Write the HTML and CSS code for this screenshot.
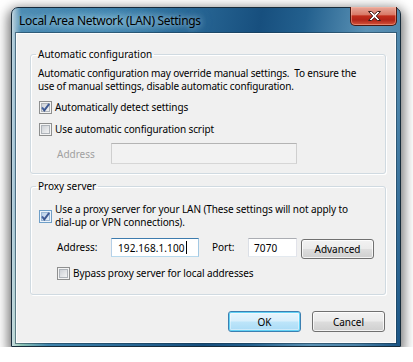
FILE: index.html
```html
<!DOCTYPE html>
<html>
<head>
<meta charset="utf-8">
<link rel="stylesheet" href="styles.css">
</head>
<body>
<div class="window">
  <div class="titlebar">
    <span class="title">Local Area Network (LAN) Settings</span>
    <button class="close" aria-label="Close">
      <svg width="13" height="10" viewBox="0 0 13 10"><polygon points="0.5,0.5 3.6,0.5 6.5,3.2 9.4,0.5 12.5,0.5 8.3,5 12.5,9.5 9.4,9.5 6.5,6.8 3.6,9.5 0.5,9.5 4.7,5" fill="#ffffff" stroke="#3a1c18" stroke-width="1" stroke-linejoin="round"/></svg>
    </button>
  </div>
  <div class="client">
    <fieldset class="group group-auto">
      <legend>Automatic configuration</legend>
      <p class="desc">Automatic configuration may override manual settings.&nbsp; To ensure the<br>use of manual settings, disable automatic configuration.</p>
      <label class="check row-cb1">
        <span class="cb"><svg width="11" height="11" viewBox="0 0 11 11"><defs><linearGradient id="ck" x1="0" y1="0" x2="1" y2="1"><stop offset="0" stop-color="#5a78b8"/><stop offset="1" stop-color="#2a4378"/></linearGradient></defs><path d="M2 5.4 L4.3 8.3 L9.2 1.8" fill="none" stroke="url(#ck)" stroke-width="2"/></svg></span>
        <span>Automatically detect settings</span>
      </label>
      <label class="check row-cb2">
        <span class="cb"></span>
        <span>Use automatic configuration script</span>
      </label>
      <div class="field-row row-script">
        <span class="field-label disabled">Address</span>
        <span class="textbox textbox-disabled script-box"></span>
      </div>
    </fieldset>
    <fieldset class="group group-proxy">
      <legend>Proxy server</legend>
      <label class="check multi">
        <span class="cb hot"><svg width="11" height="11" viewBox="0 0 11 11"><path d="M2 5.4 L4.3 8.3 L9.2 1.8" fill="none" stroke="url(#ck)" stroke-width="2"/></svg></span>
        <span>Use a proxy server for your LAN (These settings will not apply to<br>dial-up or VPN connections).</span>
      </label>
      <div class="field-row row-proxy">
        <span class="field-label">Address:</span>
        <span class="textbox textbox-focus addr-box">192.168.1.100<span class="caret"></span></span>
        <span class="port-label">Port:</span>
        <span class="textbox port-box">7070</span>
        <button class="btn advanced">Advanced</button>
      </div>
      <label class="check sub">
        <span class="cb"></span>
        <span>Bypass proxy server for local addresses</span>
      </label>
    </fieldset>
    <div class="actions">
      <button class="btn default">OK</button>
      <button class="btn">Cancel</button>
    </div>
  </div>
</div>
</body>
</html>
```
FILE: styles.css
```css
html, body {
  margin: 0;
  background: #ffffff;
}
body {
  font-family: "Noto Sans", "DejaVu Sans", sans-serif;
  font-size: 10px;
  color: #000;
}
.window {
  box-sizing: border-box;
  width: 390px;
  height: 340px;
  margin: 7px 0 0 11px;
  border: 1px solid #172b3a;
  border-radius: 7px 7px 0 0;
  padding: 0 4px 3px;
  display: flex;
  flex-direction: column;
  background:
    radial-gradient(ellipse 115px 18px at 95px 14px, rgba(130, 188, 212, 0.55), rgba(130, 188, 212, 0) 75%),
    linear-gradient(90deg, rgba(200, 218, 226, 0.95) 0, rgba(200, 218, 226, 0) 9px),
    radial-gradient(ellipse 36px 140px at 0 100%, rgba(170, 220, 182, 0.95), rgba(170, 220, 182, 0) 100%),
    linear-gradient(100deg, #4f8fb4 0%, #3f84ad 22%, #276593 42%, #174f7e 56%, #23608e 66%, #5b92b5 80%, #4c84aa 90%, #1a5484 100%);
  box-shadow: 0 4px 12px 3px rgba(0, 0, 0, 0.55);
}
.titlebar {
  height: 25px;
  display: flex;
  align-items: flex-start;
}
.title {
  margin: 5px 0 0 3px;
  font-size: 12px;
  line-height: 16px;
  letter-spacing: -0.3px;
  color: #000;
  text-shadow: 0 0 6px rgba(190, 225, 240, 0.85), 0 0 12px rgba(170, 210, 230, 0.6);
}
.close {
  box-sizing: border-box;
  margin: -1px -1px 0 auto;
  width: 47px;
  height: 19px;
  padding: 0;
  border: 1px solid #4a1710;
  border-top: none;
  border-radius: 0 0 5px 5px;
  background: linear-gradient(180deg, #e8a99b 0%, #d97a68 42%, #c02d1b 50%, #b22418 72%, #d4553c 100%);
  box-shadow: inset 0 0 0 1px rgba(255, 190, 170, 0.45);
  display: flex;
  align-items: center;
  justify-content: center;
}
.close svg {
  display: block;
  margin: 0 0 1px 2px;
}
.client {
  flex: 1;
  background: #f0f0f0;
  border: 1px solid rgba(255, 255, 255, 0.85);
  box-shadow: 0 0 0 1px rgba(25, 55, 75, 0.55);
  padding: 14px 9px 0 13px;
  display: flex;
  flex-direction: column;
}
.group {
  margin: 0;
  padding: 6.5px 6px 9px 7px;
  border: 1px solid #d0dae1;
  border-radius: 3px;
  box-shadow: inset 1px 1px 0 #fff, 1px 1px 0 #fff;
  min-width: 0;
}
.group legend {
  padding: 0 2px;
  margin-left: -2px;
  line-height: 12px;
}
.group-proxy {
  margin-top: 6px;
  padding-top: 11px;
  padding-bottom: 13px;
}
.desc {
  margin: 0;
  line-height: 13px;
  letter-spacing: -0.15px;
}
.check {
  display: flex;
  align-items: center;
  height: 16px;
  gap: 3px;
  margin-left: 1px;
  letter-spacing: -0.1px;
}
.row-cb1 { margin-top: 6.5px; }
.row-cb2 { margin-top: 6px; }
.check.multi {
  height: 26px;
  line-height: 13px;
}
.check.sub {
  margin-top: 6px;
  margin-left: 19px;
}
.cb {
  box-sizing: border-box;
  flex: none;
  width: 13px;
  height: 13px;
  border: 1px solid #8e8f8f;
  background: linear-gradient(135deg, #c9cdd3 10%, #f7f7f7 90%);
  box-shadow: inset 0 0 0 1px #f4f4f4, inset 0 0 0 2px #aeb3b9;
}
.cb.hot {
  border-color: #6f9fc8;
  background: linear-gradient(135deg, #b2cbe6 10%, #eef4fb 90%);
  box-shadow: inset 0 0 0 1px #eef4fb, inset 0 0 0 2px #9ab6d4;
}
.cb svg {
  display: block;
}
.field-row {
  display: flex;
  align-items: center;
  margin-left: 19px;
}
.row-script {
  margin-top: 6px;
  height: 21px;
}
.row-proxy {
  margin-top: 9px;
  height: 21px;
  align-items: flex-start;
}
.field-label {
  width: 54px;
  flex: none;
}
.row-proxy .field-label,
.row-proxy .port-label {
  line-height: 19px;
}
.disabled {
  color: #a0a0a0;
}
.textbox {
  box-sizing: border-box;
  height: 19px;
  border: 1px solid;
  border-color: #abadb3 #e2e3ea #e3e9ef #dbdfe6;
  background: #fff;
  display: flex;
  align-items: center;
  padding-left: 5px;
  letter-spacing: 0.1px;
}
.textbox-disabled {
  background: #f2f2f2;
  border-color: #b4b4b4 #cfcfcf #d6d6d6 #cfcfcf;
}
.script-box {
  width: 186px;
  height: 21px;
}
.textbox-focus {
  border-color: #3d7bad #a4c9e3 #b7d9ed #b5cfe7;
  padding-left: 6px;
}
.addr-box {
  width: 88px;
}
.caret {
  width: 1px;
  height: 13px;
  background: #000;
  margin-left: 1px;
}
.port-label {
  margin-left: 13px;
  width: 36px;
  flex: none;
}
.port-box {
  width: 49px;
}
.btn {
  box-sizing: border-box;
  width: 73px;
  height: 21px;
  padding: 0;
  border: 1px solid #707070;
  border-radius: 3px;
  background: linear-gradient(180deg, #f2f2f2 0%, #ebebeb 48%, #dddddd 52%, #cfcfcf 100%);
  box-shadow: inset 0 0 0 1px rgba(255, 255, 255, 0.75);
  font-family: inherit;
  font-size: 10px;
  color: #000;
}
.advanced {
  margin: 1px 0 0 4px;
  height: 20px;
}
.btn.default {
  border-color: #3c7fb1;
  background: linear-gradient(180deg, #e8f5fc 0%, #d8effc 48%, #bde5fa 52%, #a9dbf6 100%);
  box-shadow: inset 0 0 0 1px #62d2f5, inset 0 0 0 2px rgba(255, 255, 255, 0.4);
}
.actions {
  display: flex;
  justify-content: flex-end;
  gap: 11px;
  margin-top: 16px;
  padding-right: 1px;
}
```
